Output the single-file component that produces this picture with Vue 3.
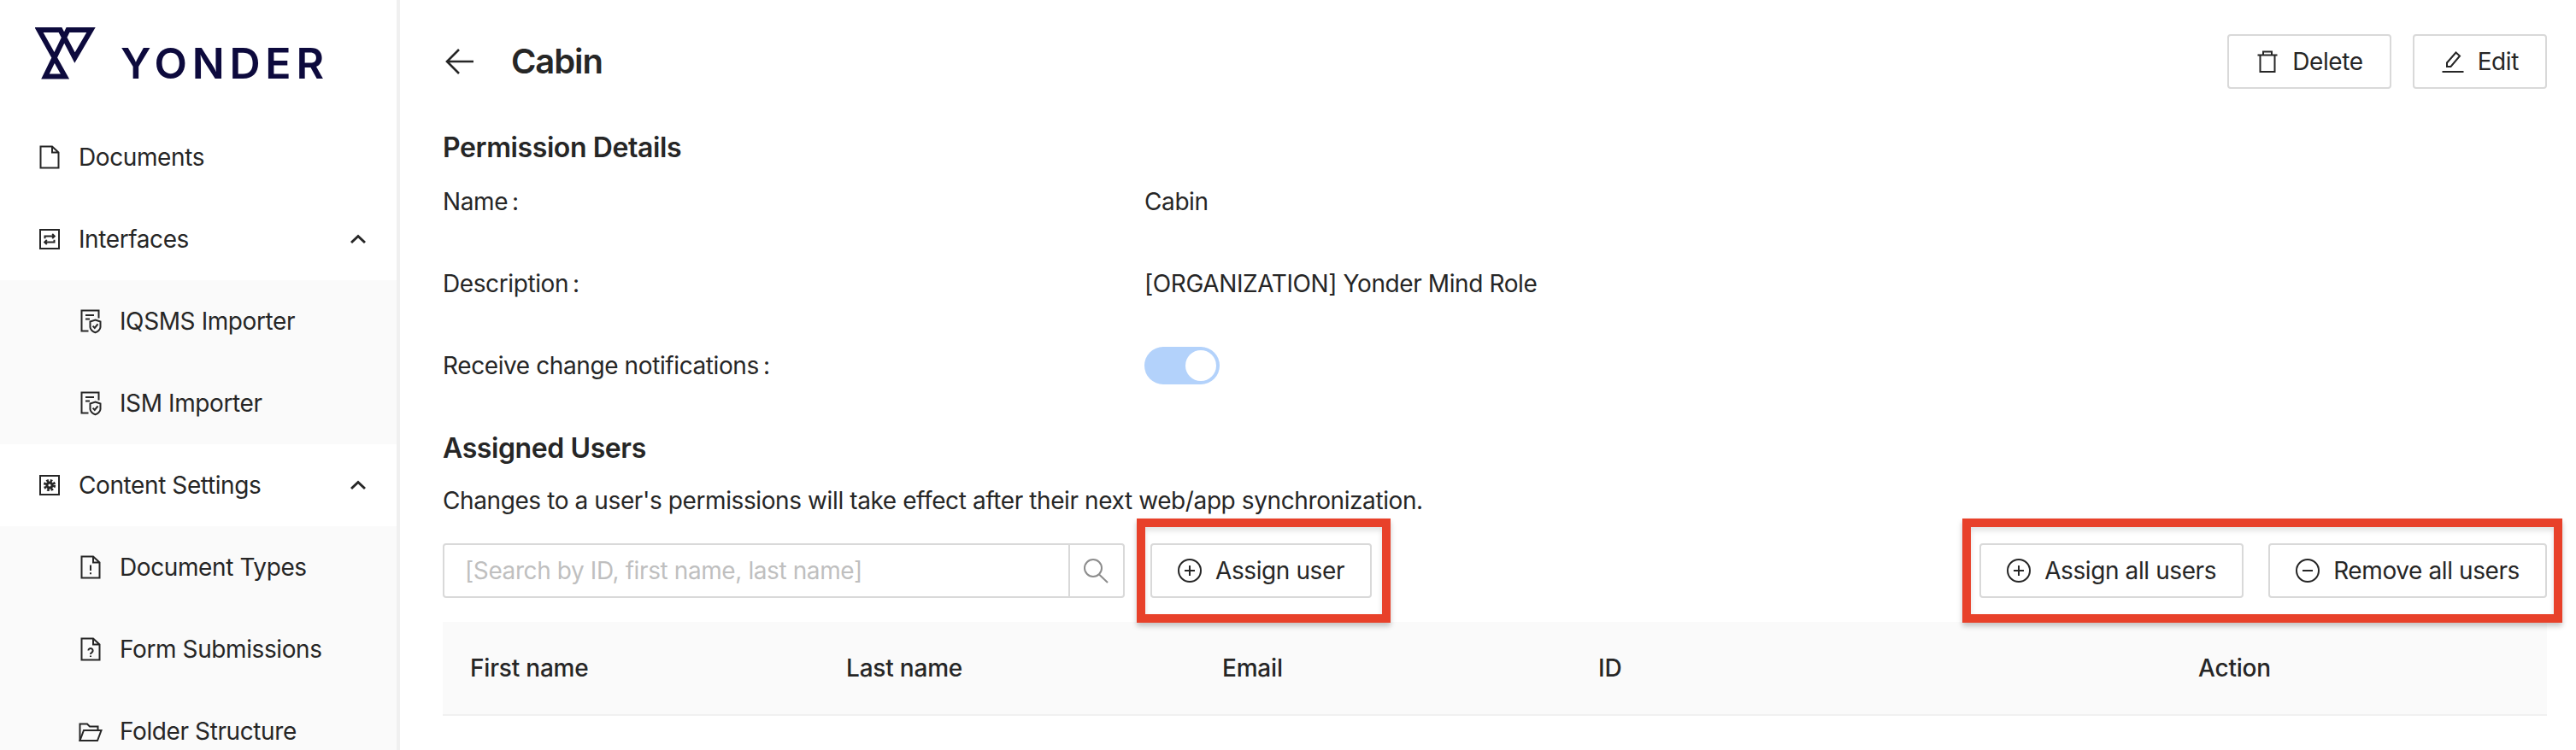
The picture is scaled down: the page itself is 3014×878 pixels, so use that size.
<script setup>
const doc = 'M3.5 1.5H17L24.5 8.5V26.5H3.5ZM17 1.5V8.5H24.5'
const protect = ['M11.5 25.5H3.5V1.5H23.5V10.5', 'M8 7H18M8 11.5H13', 'M19.5 12.5L25.5 14.5V21C25.5 24 22 26.5 19.5 27.2C17 26.5 13.5 24 13.5 21V14.5Z', 'M16.6 19.6L18.8 22L22.5 17.4']

const topIcons = {
  file: [doc],
  swap: ['M3 3H25V25H3Z', 'M8.5 13.2V10.5H19.8M17.2 7.9L19.8 10.5L17.2 13.1', 'M19.5 14.8V17.5H8.2M10.8 14.9L8.2 17.5L10.8 20.1'],
  gear: ['M3 3H25V25H3Z'],
  protect,
  warn: [doc, 'M14 11.5V18M14 20.2V22.2'],
  ask: [doc, 'M11.4 15.6A2.6 2.6 0 1 1 15.4 17.8C14.4 18.4 14 18.9 14 19.9M14 21.4V23'],
  folder: ['M1.5 25V5.5H10L13 8.5H22.5V13', 'M1.5 25H22L26.5 13H6Z']
}

const menu = [
  { label: 'Documents', icon: 'file' },
  { label: 'Interfaces', icon: 'swap', open: true, children: [
    { label: 'IQSMS Importer', icon: 'protect' },
    { label: 'ISM Importer', icon: 'protect' }
  ] },
  { label: 'Content Settings', icon: 'gear', open: true, children: [
    { label: 'Document Types', icon: 'warn' },
    { label: 'Form Submissions', icon: 'ask' },
    { label: 'Folder Structure', icon: 'folder' }
  ] }
]

const fields = [
  { label: 'Name', value: 'Cabin' },
  { label: 'Description', value: '[ORGANIZATION] Yonder Mind Role' },
  { label: 'Receive change notifications', toggle: true }
]

const columns = ['First name', 'Last name', 'Email', 'ID', 'Action']
</script>

<template>
  <div class="app">
    <aside class="sidebar">
      <div class="logo">
        <svg class="mark" width="72" height="64" viewBox="41 30 72 64">
          <path d="M45.5 35H70.5L87.5 67.5L106.5 35H79.5L53 89.5H76Z" />
        </svg>
        <span class="wordmark">YONDER</span>
      </div>
      <template v-for="item in menu" :key="item.label">
        <div class="item">
          <svg class="icon" viewBox="0 0 28 28">
            <path v-for="d in topIcons[item.icon]" :key="d" :d="d" />
            <template v-if="item.icon === 'gear'">
              <circle class="gear-teeth" cx="14" cy="14" r="5.6" />
              <circle class="gear-body" cx="14" cy="14" r="4.6" />
              <circle class="gear-hole" cx="14" cy="14" r="1.6" />
            </template>
          </svg>
          <span class="item-label">{{ item.label }}</span>
          <svg v-if="item.open" class="chevron" width="18" height="12" viewBox="0 0 18 12">
            <path d="M1 10L9 2.5L17 10" />
          </svg>
        </div>
        <div v-if="item.children" class="submenu">
          <div v-for="child in item.children" :key="child.label" class="item sub">
            <svg class="icon" viewBox="0 0 28 28">
              <path v-for="d in topIcons[child.icon]" :key="d" :d="d" />
            </svg>
            <span class="item-label">{{ child.label }}</span>
          </div>
        </div>
      </template>
    </aside>

    <main class="main">
      <header class="header">
        <svg class="back" width="34" height="34" viewBox="0 0 34 34">
          <path d="M33 17H2M16 3L2 17L16 31" />
        </svg>
        <h1 class="title">Cabin</h1>
        <div class="header-actions">
          <button class="btn">
            <svg class="btn-icon" viewBox="0 0 28 28">
              <path d="M2.5 6.5H25.5M9 6.5V2.5H19V6.5M5.5 6.5V26H22.5V6.5" />
            </svg>
            Delete
          </button>
          <button class="btn">
            <svg class="btn-icon" viewBox="0 0 28 28">
              <path d="M7 20V15.5L17.5 3.5L22 7.5L11.5 20ZM1.5 26H26.5" />
            </svg>
            Edit
          </button>
        </div>
      </header>

      <h2 class="section first">Permission Details</h2>
      <div v-for="field in fields" :key="field.label" class="field">
        <div class="field-label">{{ field.label }}<span class="colon">:</span></div>
        <div v-if="field.value" class="field-value">{{ field.value }}</div>
        <div v-else class="switch"><span class="knob"></span></div>
      </div>

      <h2 class="section second">Assigned Users</h2>
      <p class="hint">Changes to a user's permissions will take effect after their next web/app synchronization.</p>

      <div class="toolbar">
        <div class="search">
          <div class="search-input">[Search by ID, first name, last name]</div>
          <div class="search-button">
            <svg width="32" height="30" viewBox="0 0 32 30">
              <circle cx="12" cy="12" r="10" />
              <path d="M19 19.5L29 29" />
            </svg>
          </div>
        </div>
        <div class="marked one">
          <button class="btn">
            <svg class="btn-icon" viewBox="0 0 28 28">
              <circle cx="14" cy="14" r="13" />
              <path d="M14 8V20M8 14H20" />
            </svg>
            Assign user
          </button>
        </div>
        <div class="marked two">
          <button class="btn">
            <svg class="btn-icon" viewBox="0 0 28 28">
              <circle cx="14" cy="14" r="13" />
              <path d="M14 8V20M8 14H20" />
            </svg>
            Assign all users
          </button>
          <button class="btn">
            <svg class="btn-icon" viewBox="0 0 28 28">
              <circle cx="14" cy="14" r="13" />
              <path d="M8 14H20" />
            </svg>
            Remove all users
          </button>
        </div>
      </div>

      <div class="table-head">
        <div v-for="c in columns" :key="c" class="cell">{{ c }}</div>
      </div>
    </main>
  </div>
</template>

<style>
html, body { margin: 0; background: #fff; overflow: hidden; }
</style>

<style scoped>
.app {
  display: flex;
  height: 878px;
  overflow: hidden;
  font-family: Inter, "Liberation Sans", sans-serif;
  font-size: 28px;
  letter-spacing: -0.4px;
  color: #262626;
  background: #fff;
}
.sidebar {
  flex: none;
  width: 464px;
  height: 878px;
  overflow: hidden;
  border-right: 4px solid #f0f0f0;
}
.logo {
  display: flex;
  align-items: flex-start;
  height: 136px;
  box-sizing: border-box;
  padding: 30px 0 0 41px;
}
.mark { flex: none; }
.mark path {
  fill: none;
  stroke: #0d0a3d;
  stroke-width: 6;
  stroke-linejoin: miter;
  stroke-miterlimit: 6;
}
.wordmark {
  margin: 26px 0 0 28px;
  font-size: 50px;
  line-height: 36px;
  font-weight: 600;
  letter-spacing: 5.8px;
  color: #0d0a3d;
}
.item {
  display: flex;
  align-items: center;
  height: 96px;
  padding: 0 36px 0 44px;
}
.item.sub { padding-left: 92px; }
.submenu { background: #fafafa; }
.icon {
  flex: none;
  width: 28px;
  height: 28px;
  margin-right: 20px;
  overflow: visible;
}
.icon path {
  fill: none;
  stroke: #262626;
  stroke-width: 2;
}
.gear-teeth {
  fill: none;
  stroke: #262626;
  stroke-width: 3;
  stroke-dasharray: 2.6 1.8;
}
.gear-body { fill: #262626; }
.gear-hole { fill: #fff; }
.item-label { flex: 1; white-space: nowrap; }
.chevron { flex: none; }
.chevron path {
  fill: none;
  stroke: #262626;
  stroke-width: 3;
}
.main {
  flex: 1;
  min-width: 0;
  padding: 0 34px 0 50px;
}
.header {
  display: flex;
  align-items: center;
  height: 64px;
  padding-top: 40px;
}
.back {
  flex: none;
  margin-left: 3px;
}
.back path {
  fill: none;
  stroke: #262626;
  stroke-width: 2.6;
}
.title {
  margin: 0 0 0 43px;
  font-size: 40px;
  line-height: 64px;
  font-weight: 600;
  letter-spacing: -1.1px;
}
.header-actions {
  display: flex;
  gap: 25px;
  margin-left: auto;
}
.header-actions .btn { padding: 0 31px; gap: 15px; }
.btn {
  display: inline-flex;
  align-items: center;
  gap: 16px;
  box-sizing: border-box;
  height: 64px;
  padding: 0 30px;
  background: #fff;
  border: 2px solid #d9d9d9;
  border-radius: 4px;
  font: inherit;
  letter-spacing: inherit;
  color: #262626;
  white-space: nowrap;
}
.btn-icon {
  flex: none;
  width: 28px;
  height: 28px;
}
.btn-icon path, .btn-icon circle {
  fill: none;
  stroke: #262626;
  stroke-width: 2;
}
.section {
  margin: 0;
  font-size: 32px;
  line-height: 44px;
  font-weight: 600;
}
.section.first { margin-top: 47px; margin-bottom: 17px; }
.section.second { margin-top: 51px; }
.field {
  display: flex;
  align-items: center;
  height: 48px;
  margin-bottom: 48px;
}
.field-label {
  flex: none;
  width: 821px;
}
.colon { margin-left: 5px; }
.switch {
  position: relative;
  width: 88px;
  height: 44px;
  border-radius: 22px;
  background: #b3d2fb;
}
.knob {
  position: absolute;
  top: 4px;
  right: 4px;
  width: 36px;
  height: 36px;
  border-radius: 50%;
  background: #fff;
}
.hint {
  margin: 17px 0 0;
  line-height: 44px;
}
.toolbar {
  display: flex;
  align-items: flex-start;
  height: 64px;
  margin-top: 28px;
}
.search {
  display: flex;
  box-sizing: border-box;
  width: 798px;
  height: 64px;
  border: 2px solid #d9d9d9;
  border-radius: 4px;
}
.search-input {
  flex: 1;
  padding-left: 24px;
  line-height: 60px;
  color: #bfbfbf;
  white-space: nowrap;
}
.search-button {
  display: flex;
  align-items: center;
  justify-content: center;
  width: 62px;
  border-left: 2px solid #d9d9d9;
}
.search-button circle, .search-button path {
  fill: none;
  stroke: #8c8c8c;
  stroke-width: 2;
}
.marked {
  position: relative;
  display: flex;
  gap: 29px;
}
.marked.one { margin-left: 30px; }
.marked.two { margin-left: auto; }
.marked::after {
  content: "";
  position: absolute;
  top: -29px;
  bottom: -29px;
  border: 10px solid #e8412a;
  box-shadow: 0 4px 6px rgba(0, 0, 0, 0.22), inset 0 4px 6px rgba(0, 0, 0, 0.12);
  pointer-events: none;
}
.marked.one::after { left: -16px; right: -22px; }
.marked.two::after { left: -20px; right: -18px; }
.table-head {
  display: grid;
  grid-template-columns: 440px 440px 440px 702px 440px;
  align-items: center;
  height: 110px;
  margin-top: 28px;
  box-sizing: border-box;
  background: #fafafa;
  border-bottom: 2px solid #f0f0f0;
  font-weight: 500;
  letter-spacing: -0.2px;
}
.cell { padding-left: 32px; }
</style>
